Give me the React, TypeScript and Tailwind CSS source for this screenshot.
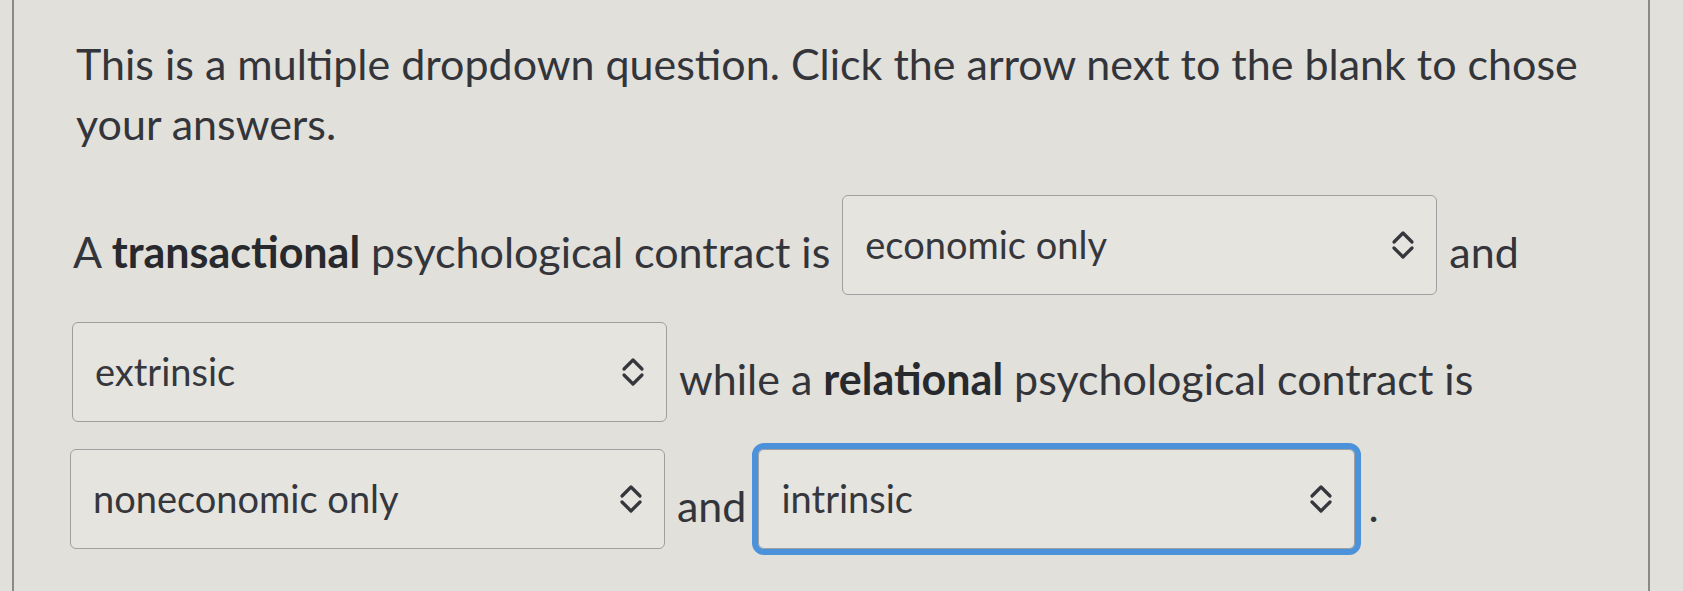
import React from "react";

const Chevrons = () => (
  <svg width="24" height="32" viewBox="0 0 24 32" fill="none" stroke="#35373c" strokeWidth="3.2" strokeLinecap="round" strokeLinejoin="round">
    <polyline points="3,13 12,4 21,13" />
    <polyline points="3,19 12,28 21,19" />
  </svg>
);

const Dropdown = ({ value, focused = false }: { value: string; focused?: boolean }) => (
  <div
    className={
      focused
        ? "flex h-[100px] w-[597px] shrink-0 items-center justify-between rounded-[6px] border border-[#9f9f9f] bg-[#e5e4df] pl-[22px] pr-[21px] outline-[6px] outline-solid outline-[#4b92da]"
        : "flex h-[100px] w-[595px] shrink-0 items-center justify-between rounded-[6px] border-[1.5px] border-[#9f9f9f] bg-[#e5e4df] pl-[22px] pr-[21px]"
    }
  >
    <span className="text-[38px] leading-[1.2] text-[#35373c]">{value}</span>
    <Chevrons />
  </div>
);

const App = () => {
  return (
    <div className="h-[591px] w-[1683px] overflow-hidden bg-[#e1e0db] font-['Lato',sans-serif] text-[#33353a]">
      <div className="ml-[12px] h-full w-[1638px] border-x-2 border-[#8a8a88] pl-[62px] pt-[34px]">
        <p className="text-[43px] leading-[60px]">
          This is a multiple dropdown question. Click the arrow next to the blank to chose
          <br />
          your answers.
        </p>

        <div className="mt-[41px] flex flex-col gap-[27px]">
          <div className="-ml-[3px] flex items-center gap-3">
            <span className="mt-[14px] text-[43px] leading-[60px]">
              A <b className="font-bold text-[#28292d]">transactional</b> psychological contract is
            </span>
            <Dropdown value="economic only" />
            <span className="mt-[14px] text-[43px] leading-[60px]">and</span>
          </div>

          <div className="-ml-[4px] flex items-center gap-3">
            <Dropdown value="extrinsic" />
            <span className="mt-[14px] text-[43px] leading-[60px]">
              while a <b className="font-bold text-[#28292d]">relational</b> psychological contract is
            </span>
          </div>

          <div className="-ml-[6px] flex items-center gap-3">
            <Dropdown value="noneconomic only" />
            <span className="mt-[14px] text-[43px] leading-[60px]">and</span>
            <Dropdown value="intrinsic" focused />
            <span className="mt-[14px] ml-[1px] text-[43px] leading-[60px]">.</span>
          </div>
        </div>
      </div>
    </div>
  );
};

export default App;
